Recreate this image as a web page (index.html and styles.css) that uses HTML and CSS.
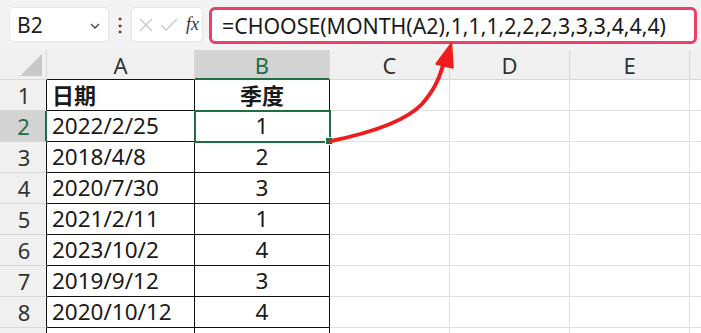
FILE: index.html
```html
<!DOCTYPE html>
<html lang="zh">
<head>
<meta charset="utf-8">
<link rel="stylesheet" href="styles.css">
</head>
<body>
<div class="app">
  <div class="topbar">
    <div class="namebox"><span>B2</span>
      <svg class="chev" width="12" height="8" viewBox="0 0 12 8"><path d="M2 2 L6 6 L10 2" fill="none" stroke="#444" stroke-width="1.3"/></svg>
    </div>
    <div class="dots">⋮</div>
    <div class="btns">
      <svg width="16" height="16" viewBox="0 0 16 16"><path d="M2 2 L14 14 M14 2 L2 14" stroke="#c8c8c8" stroke-width="1.3"/></svg>
      <svg width="18" height="16" viewBox="0 0 18 16"><path d="M1 8 L6 13 L17 2" fill="none" stroke="#c8c8c8" stroke-width="1.3"/></svg>
      <span class="fx">fx</span>
    </div>
    <div class="formula">=CHOOSE(MONTH(A2),1,1,1,2,2,2,3,3,3,4,4,4)</div>
  </div>
  <div class="grid">
    <div class="corner"><div class="tri"></div></div>
    <div class="ch dark">A</div>
    <div class="ch sel">B</div>
    <div class="ch">C</div>
    <div class="ch">D</div>
    <div class="ch">E</div>
    <div class="ch last"></div>

    <div class="rh">1</div><div class="c a hd">日期</div><div class="c b hd">季度</div><div class="c e"></div><div class="c e"></div><div class="c e"></div><div class="c e last"></div>
    <div class="rh rsel">2</div><div class="c a">2022/2/25</div><div class="c b active">1</div><div class="c e"></div><div class="c e"></div><div class="c e"></div><div class="c e last"></div>
    <div class="rh">3</div><div class="c a">2018/4/8</div><div class="c b">2</div><div class="c e"></div><div class="c e"></div><div class="c e"></div><div class="c e last"></div>
    <div class="rh">4</div><div class="c a">2020/7/30</div><div class="c b">3</div><div class="c e"></div><div class="c e"></div><div class="c e"></div><div class="c e last"></div>
    <div class="rh">5</div><div class="c a">2021/2/11</div><div class="c b">1</div><div class="c e"></div><div class="c e"></div><div class="c e"></div><div class="c e last"></div>
    <div class="rh">6</div><div class="c a">2023/10/2</div><div class="c b">4</div><div class="c e"></div><div class="c e"></div><div class="c e"></div><div class="c e last"></div>
    <div class="rh">7</div><div class="c a">2019/9/12</div><div class="c b">3</div><div class="c e"></div><div class="c e"></div><div class="c e"></div><div class="c e last"></div>
    <div class="rh">8</div><div class="c a">2020/10/12</div><div class="c b">4</div><div class="c e"></div><div class="c e"></div><div class="c e"></div><div class="c e last"></div>
    <div class="rh"></div><div class="c a"></div><div class="c b"></div><div class="c e"></div><div class="c e"></div><div class="c e"></div><div class="c e last"></div>
  </div>
  <svg class="arrow" width="701" height="333" viewBox="0 0 701 333">
    <path d="M331 141 C 370 133, 405 122, 422 104 C 436 88, 440 76, 444 62" fill="none" stroke="#ee1c1c" stroke-width="4" stroke-linecap="round"/>
    <path d="M451.5 43 L436 64 L453 68 Z" fill="#ee1c1c" stroke="#ee1c1c" stroke-width="1.5" stroke-linejoin="round"/>
  </svg>
</div>
</body>
</html>
```
FILE: styles.css
```css
* { box-sizing: border-box; }
html, body { margin: 0; padding: 0; background: #fff; }
body {
  width: 701px; height: 333px; overflow: hidden;
  font-family: "Noto Sans", "Noto Sans CJK SC", sans-serif;
  color: #1a1a1a;
}
.app { position: relative; width: 701px; height: 333px; overflow: hidden; }
.topbar {
  height: 50px;
  background: #f3f3f3;
  display: flex;
  align-items: flex-start;
  padding: 7px 0 0 9px;
}
.namebox {
  width: 100px; height: 35px;
  background: #fff;
  border: 1px solid #e6e6e6;
  border-radius: 5px;
  display: flex; align-items: center; justify-content: space-between;
  padding: 0 7px 0 7px;
  font-size: 21px;
  color: #222;
}
.namebox .chev { margin-top: 2px; }
.dots {
  width: 22px; text-align: center;
  font-size: 18px; line-height: 35px; color: #444; font-weight: bold;
}
.btns {
  width: 72px; height: 35px;
  background: #fff;
  border: 1px solid #e6e6e6;
  border-radius: 5px;
  display: flex; align-items: center; gap: 6px;
  padding: 0 0 0 6px;
}
.fx {
  font-family: "Liberation Serif", serif;
  font-style: italic;
  font-size: 18px;
  color: #333;
  margin-left: 2px;
}
.formula {
  margin-left: 6px;
  width: 488px; height: 37px;
  background: #fff;
  border: 3px solid #ea3f6b;
  border-radius: 6px;
  font-size: 21.3px;
  line-height: 31px;
  padding-left: 10px;
  color: #1a1a1a;
  white-space: nowrap;
}
.grid {
  display: grid;
  grid-template-columns: 47px 148px 135px 120px 120px 120px 11px;
  grid-template-rows: 30px repeat(9, 31px);
}
.corner {
  background: #f0f0f0;
  border-right: 1px solid #d8d8d8;
  border-bottom: 1px solid #d8d8d8;
  position: relative;
}
.tri {
  position: absolute; right: 4px; bottom: 3px;
  width: 0; height: 0;
  border-left: 22px solid transparent;
  border-bottom: 22px solid #c8c8c8;
}
.ch {
  background: #f0f0f0;
  border-right: 1px solid #d8d8d8;
  border-bottom: 1px solid #d8d8d8;
  text-align: center;
  font-size: 22px;
  line-height: 30px;
  color: #333;
}
.ch.dark { border-bottom-color: #111; }
.ch.sel {
  background: #d3d3d3;
  border-bottom: 2px solid #1e6e42;
  color: #1e6e42;
}
.ch.last, .c.last { border-right: none; }
.rh {
  background: #f0f0f0;
  border-right: 1px solid #111;
  border-bottom: 1px solid #d8d8d8;
  text-align: center;
  font-size: 22px;
  line-height: 31px;
  color: #333;
  padding-left: 2px;
}
.rh.rsel {
  background: #d3d3d3;
  color: #1e6e42;
  border-right: 2px solid #1e6e42;
}
.c {
  border-right: 1px solid #e1e1e1;
  border-bottom: 1px solid #e1e1e1;
  font-size: 22.5px;
  line-height: 30px;
  white-space: nowrap;
}
.c.a { border-right-color: #111; border-bottom-color: #111; padding-left: 5px; }
.c.b { border-right-color: #111; border-bottom-color: #111; text-align: center; }
.c.hd { font-weight: bold; font-size: 22px; }
.c.active {
  position: relative;
  outline: 2px solid #1e6e42;
  outline-offset: -1px;
  z-index: 1;
}
.c.active::after {
  content: "";
  position: absolute;
  right: -4px; bottom: -4px;
  width: 6px; height: 6px;
  background: #1e6e42;
  border: 1px solid #fff;
}
.arrow { position: absolute; left: 0; top: 0; pointer-events: none; z-index: 5; }
```
